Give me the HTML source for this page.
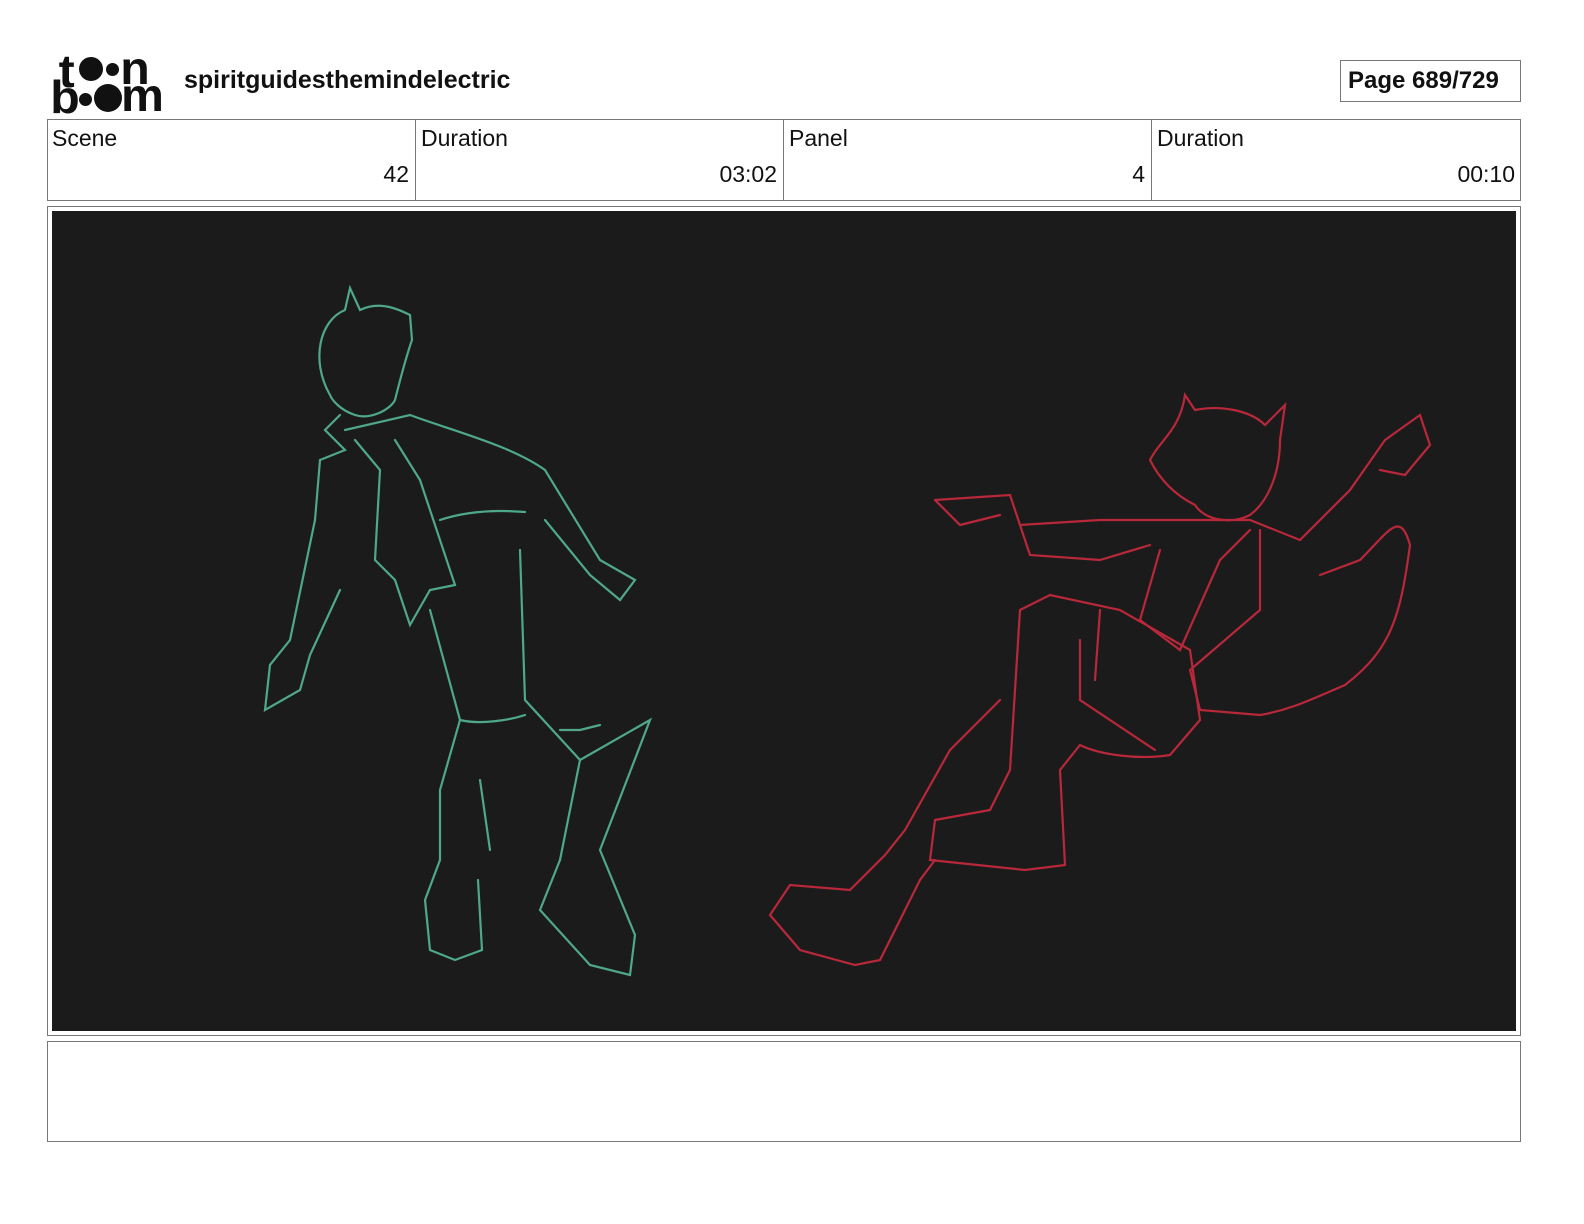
<!DOCTYPE html>
<html><head><meta charset="utf-8"><style>
*{margin:0;padding:0;box-sizing:border-box}
body{width:1584px;height:1224px;background:#fff;position:relative;font-family:"Liberation Sans",sans-serif;color:#111;overflow:hidden}
.abs{position:absolute}
.box{position:absolute;border:1px solid #777}
.lbl{position:absolute;font-size:23px;left:5px;top:6px}
.val{position:absolute;font-size:23px;right:6px;top:42px}
.dot{position:absolute;background:#111;border-radius:50%}
.lg{position:absolute;font:bold 46px/46px 'Liberation Sans';transform:scaleX(1.05)}
</style></head><body>
<div class="abs" style="left:52px;top:48px;width:112px;height:66px">
 <div class="lg" style="left:7px;top:0">t</div>
 <div class="dot" style="left:27px;top:9px;width:24px;height:24px"></div>
 <div class="dot" style="left:54px;top:15px;width:13px;height:13px"></div>
 <div class="lg" style="left:69px;top:-3px">n</div>
 <div class="lg" style="left:-1px;top:26px">b</div>
 <div class="dot" style="left:27px;top:45px;width:13px;height:13px"></div>
 <div class="dot" style="left:42px;top:36px;width:28px;height:28px"></div>
 <div class="lg" style="left:70px;top:24px">m</div>
</div>
<div class="abs" style="left:184px;top:66px;font:bold 25px 'Liberation Sans'">spiritguidesthemindelectric</div>
<div class="box" style="left:1340px;top:60px;width:181px;height:42px;font:bold 24px 'Liberation Sans';padding:6px 0 0 7px">Page 689/729</div>

<div class="box" style="left:47px;top:119px;width:1474px;height:82px"></div>
<div class="abs" style="left:47px;top:119px;width:369px;height:82px;border-right:1px solid #777"><div class="lbl">Scene</div><div class="val">42</div></div>
<div class="abs" style="left:416px;top:119px;width:368px;height:82px;border-right:1px solid #777"><div class="lbl">Duration</div><div class="val">03:02</div></div>
<div class="abs" style="left:784px;top:119px;width:368px;height:82px;border-right:1px solid #777"><div class="lbl">Panel</div><div class="val">4</div></div>
<div class="abs" style="left:1152px;top:119px;width:369px;height:82px"><div class="lbl">Duration</div><div class="val">00:10</div></div>

<div class="box" style="left:47px;top:206px;width:1474px;height:830px"></div>
<div class="abs" style="left:52px;top:211px;width:1464px;height:820px;background:#1b1b1b">
<svg width="1464" height="820" viewBox="52 211 1464 820" fill="none" stroke-width="2.2" stroke-linecap="round">
<g stroke="#4fa887">
<path d="M330 395 C310 360 320 320 345 310 L350 288 L360 310 C380 300 400 310 410 315 L412 340 C405 360 400 380 395 400 C390 410 370 420 355 415 C340 410 332 400 330 395Z"/>
<path d="M340 415 L325 430 L345 450 L320 460 L315 520 L290 640 L270 665 L265 710 L300 690 L310 655 L340 590"/>
<path d="M345 430 L410 415 C450 430 510 445 545 470 L600 560 L635 580 L620 600 L590 575 L545 520"/>
<path d="M355 440 L380 470 L375 560 L395 580 L410 625 L430 590 L455 585 L420 480 L395 440"/>
<path d="M440 520 C470 510 500 510 525 512"/>
<path d="M520 550 L525 700 L580 760 L560 860"/>
<path d="M430 610 L460 720 L440 790 L440 860 L425 900 L430 950 L455 960 L482 950 L478 880"/>
<path d="M460 720 C480 725 510 720 525 715"/>
<path d="M580 760 L650 720 L600 850 L635 935 L630 975 L590 965 L540 910 L560 860"/>
<path d="M480 780 L490 850 M560 730 L580 730 L600 725"/>
</g>
<g stroke="#b8283a">
<path d="M1150 460 C1160 440 1180 430 1185 395 L1195 410 C1220 405 1250 410 1265 425 L1285 405 L1280 440 C1280 470 1270 500 1250 515 C1230 525 1205 520 1195 505 C1175 495 1160 480 1150 460Z"/>
<path d="M935 500 L1010 495 L1020 525 L1100 520 L1180 520 L1250 520 L1300 540 L1350 490 L1385 440 L1420 415 L1430 445 L1405 475 L1380 470"/>
<path d="M935 500 L960 525 L1000 515 M1020 525 L1030 555 L1100 560 L1150 545"/>
<path d="M1320 575 L1360 560 C1390 530 1400 510 1410 545 C1400 620 1390 650 1345 685 C1310 700 1290 710 1260 715 L1200 710 L1190 670 L1260 610 L1260 530"/>
<path d="M1160 550 L1140 620 L1180 650 L1220 560 L1250 530"/>
<path d="M1020 610 L1050 595 L1120 610 L1190 650 L1200 720 L1170 755 C1140 760 1100 755 1080 745 L1060 770 L1065 865 L1025 870 L930 860 L935 820 L990 810 L1010 770 L1020 610"/>
<path d="M1080 640 L1080 700 L1155 750"/>
<path d="M1000 700 L950 750 L905 830 L885 855 L850 890 L790 885 L770 915 L800 950 L855 965 L880 960 L920 880 L935 860"/>
<path d="M1100 610 L1095 680"/>
</g>
</svg>
</div>

<div class="box" style="left:47px;top:1041px;width:1474px;height:101px"></div>
</body></html>
